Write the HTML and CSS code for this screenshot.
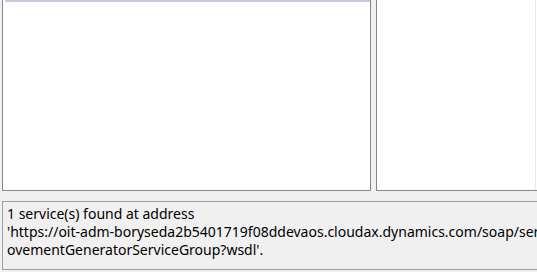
FILE: index.html
```html
<!DOCTYPE html>
<html lang="en">
<head>
    <meta charset="UTF-8">
    <title>Add Service Reference</title>
    <link rel="stylesheet" href="styles.css">
</head>
<body>

<div class="dialog">
    <div class="panels">
        <div class="services-list">
            <div class="selected-row"></div>
        </div>
        <div class="operations-list">
            <div class="scroll-edge"></div>
        </div>
    </div>

    <div class="status">
        <p>1 service(s) found at address</p>
        <p>'https://oit-adm-boryseda2b5401719f08ddevaos.cloudax.dynamics.com/soap/services/ProdMovementGeneratorServiceGroup?wsdl'.</p>
        <p>ovementGeneratorServiceGroup?wsdl'.</p>
    </div>
</div>

</body>
</html>
```

FILE: styles.css
```css
body {
    margin: 0;
    background-color: #f0f0f0;
    font-family: "Noto Sans", "Open Sans", sans-serif;
    overflow: hidden;
}
.dialog {
    width: 537px;
    height: 272px;
    padding-left: 2px;
    box-sizing: border-box;
}
.panels {
    display: flex;
    gap: 5px;
    height: 191px;
}
.services-list {
    width: 369px;
    background-color: #fff;
    border: 1px solid #828790;
    border-top: none;
    box-sizing: border-box;
    padding-left: 2px;
}
.selected-row {
    height: 2px;
    background-color: #c9cbdc;
}
.operations-list {
    flex: 1;
    display: flex;
    justify-content: flex-end;
    background-color: #fff;
    border: 1px solid #828790;
    border-top: none;
    border-right: none;
    margin-right: -10px;
    padding-right: 11px;
}
.scroll-edge {
    width: 1px;
    background-color: #e3e8f4;
}
.status {
    margin-top: 10px;
    height: 69px;
    box-sizing: border-box;
    border: 1px solid #a0a0a0;
    border-right: none;
    padding: 3px 0 0 4px;
    font-size: 14px;
    line-height: 18px;
    color: #000;
    overflow: hidden;
    white-space: nowrap;
}
.status p {
    margin: 0;
}
```
